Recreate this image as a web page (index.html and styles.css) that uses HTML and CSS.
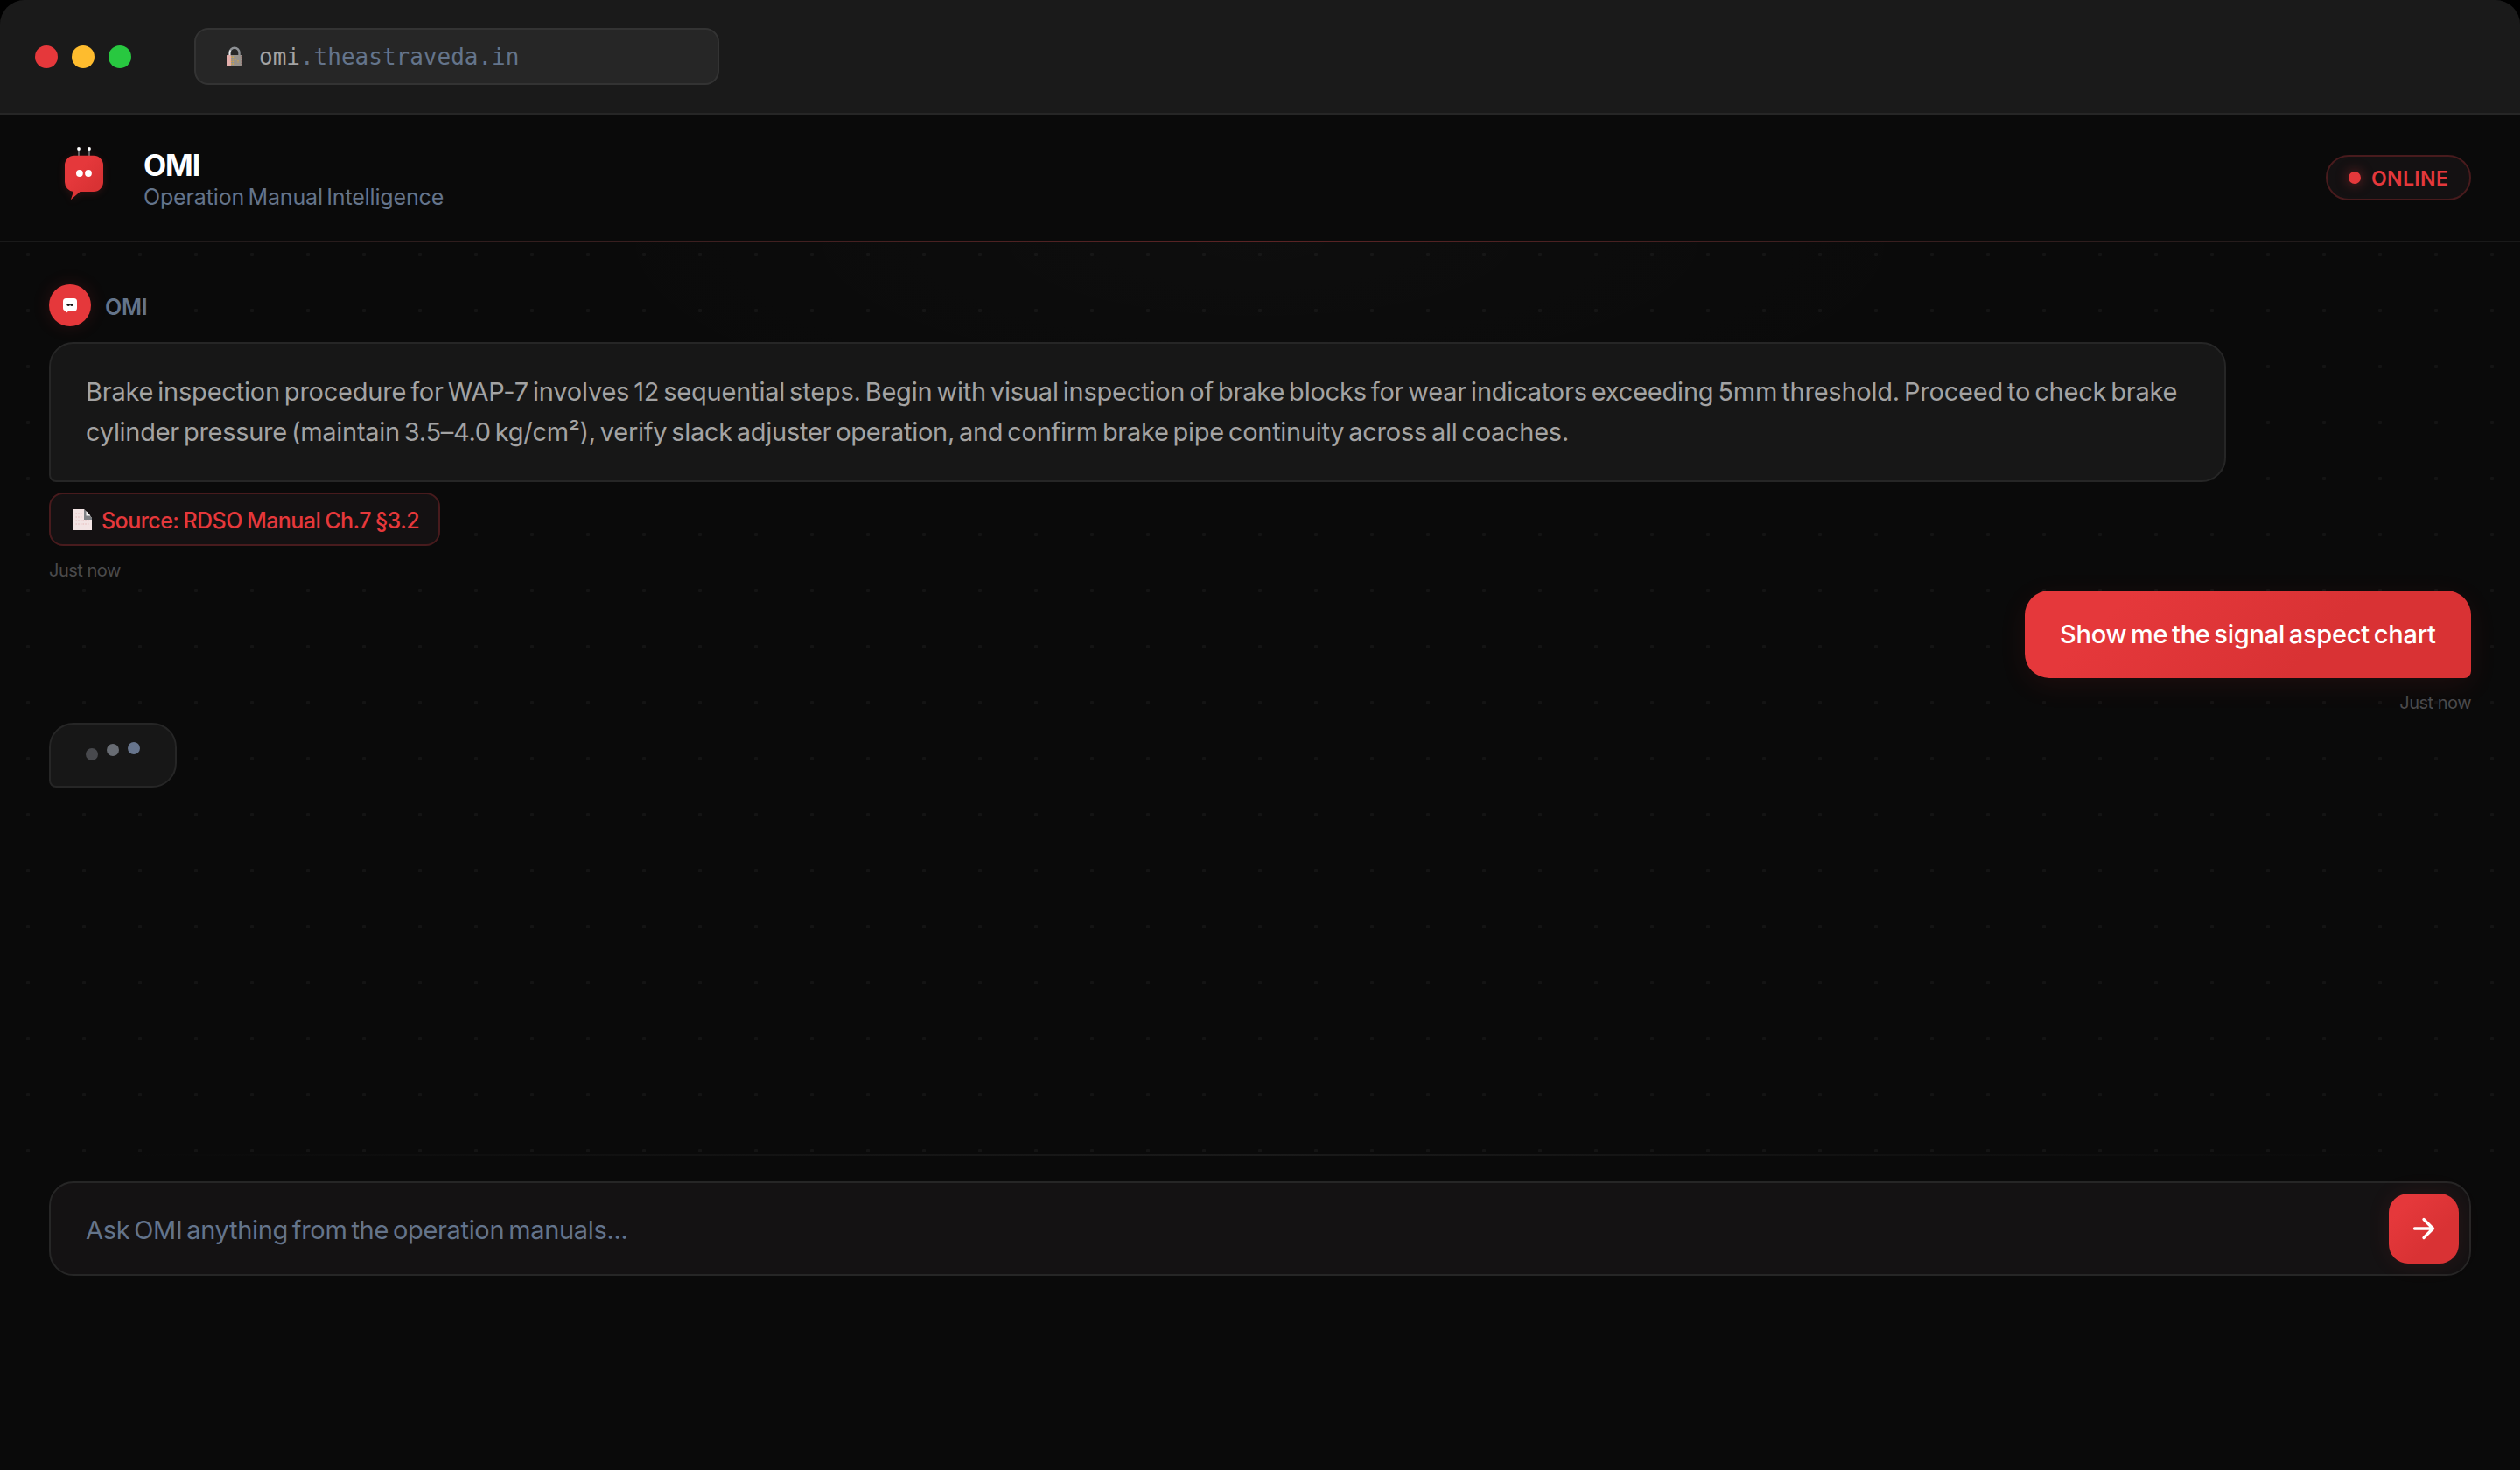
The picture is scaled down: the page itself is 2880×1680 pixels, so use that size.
FILE: index.html
```html
<!DOCTYPE html>
<html lang="en">
<head>
<meta charset="utf-8">
<title>OMI – Operation Manual Intelligence</title>
<link rel="stylesheet" href="styles.css">
</head>
<body>
<div class="window">
  <div class="browser-bar">
    <div class="lights">
      <span class="light light-red"></span>
      <span class="light light-yellow"></span>
      <span class="light light-green"></span>
    </div>
    <div class="url">
      <svg class="lock" width="18" height="24" viewBox="0 0 18 24">
        <path d="M3.500 11V7.500a5.500 5.800 0 0 1 11 0V11" fill="none" stroke="#8d9094" stroke-width="2.400"/>
        <path d="M3.500 10V7.500a5 5.400 0 0 1 1-3" fill="none" stroke="#e8e8e8" stroke-width="1.600"/>
        <rect x="0" y="10" width="18" height="12.500" rx="1.200" fill="#96918b"/>
        <rect x="0" y="10" width="5" height="12.500" rx="1" fill="#e3aeab"/>
        <path d="M5.500 11.500v10M7.500 11.500v10M10.500 14v2M13 16v3" stroke="#d3a545" stroke-width="1.200" stroke-dasharray="1.400 1.200"/>
        <path d="M17.200 11v11" stroke="#9c4443" stroke-width="1.200" stroke-dasharray="1.200 1.400"/>
      </svg>
      <span class="url-text"><span class="url-sub">omi</span>.theastraveda.in</span>
    </div>
  </div>

  <header class="header">
    <svg class="logo" width="80" height="80" viewBox="0 0 80 80">
      <defs>
        <linearGradient id="logoFill" x1="0" y1="0" x2="1" y2="1">
          <stop offset="0.35" stop-color="#e5383b"/>
          <stop offset="0.75" stop-color="#d93234"/>
        </linearGradient>
      </defs>
      <path d="M34 16V8M46 16V8" stroke="#85878b" stroke-width="1.400"/>
      <circle cx="34" cy="7" r="1.900" fill="#fff"/>
      <circle cx="46" cy="7" r="1.900" fill="#fff"/>
      <path d="M29 14.700H51a11 11 0 0 1 11 11V45a11 11 0 0 1-11 11H35.500L24.800 65.300L28 55.900A11 11 0 0 1 18 45V25.700a11 11 0 0 1 11-11z" fill="url(#logoFill)"/>
      <circle cx="34.900" cy="35" r="3.900" fill="#fff"/>
      <circle cx="45" cy="35" r="3.900" fill="#fff"/>
    </svg>
    <div class="brand">
      <div class="brand-name">OMI</div>
      <div class="brand-tag">Operation Manual Intelligence</div>
    </div>
    <div class="status"><span class="status-dot"></span><span class="status-text">ONLINE</span></div>
  </header>

  <main class="chat">
    <div class="sender">
      <span class="avatar">
        <svg width="20" height="20" viewBox="0 0 20 20">
          <path d="M5.500 2h9a3.500 3.500 0 0 1 3.500 3.500v7.500a3.500 3.500 0 0 1-3.500 3.500H8.500L5 19.300l.3-2.900A3.500 3.500 0 0 1 2 13V5.500A3.500 3.500 0 0 1 5.500 2z" fill="#fff"/>
          <ellipse cx="8.200" cy="9.500" rx="1.800" ry="1.400" fill="#111"/>
          <ellipse cx="12" cy="9.500" rx="1.800" ry="1.400" fill="#111"/>
        </svg>
      </span>
      <span class="sender-name">OMI</span>
    </div>
    <div class="bubble bubble-bot">
      <div class="line-first">Brake inspection procedure for WAP-7 involves 12 sequential steps. Begin with visual inspection of brake blocks for wear indicators exceeding 5mm threshold. Proceed to check brake</div>
      <div class="line-second">cylinder pressure (maintain 3.5–4.0 kg/cm²), verify slack adjuster operation, and confirm brake pipe continuity across all coaches.</div>
    </div>
    <div class="source">
      <svg width="22" height="24" viewBox="0 0 22 24">
        <path d="M0 0h12l9 10v14H0z" fill="#f3e4e4"/>
        <path d="M12 0l9 10v2h-9z" fill="#7f8387"/>
        <path d="M14.500 2l5 5.500h-5z" fill="#f5f5f5"/>
        <path d="M2.500 5h7M2.500 9h7M2.500 13h15M2.500 17h15" stroke="#e5b9b9" stroke-width="1.200" stroke-dasharray="1.500 1.200"/>
      </svg>
      <span class="source-text">Source: RDSO Manual Ch.7 §3.2</span>
    </div>
    <div class="time time-bot">Just now</div>

    <div class="bubble bubble-user">Show me the signal aspect chart</div>
    <div class="time time-user">Just now</div>

    <div class="typing">
      <span class="typing-dot dot-low"></span>
      <span class="typing-dot dot-mid"></span>
      <span class="typing-dot dot-high"></span>
    </div>
  </main>

  <footer class="composer">
    <div class="input">
      <span class="placeholder">Ask OMI anything from the operation manuals...</span>
      <div class="send">
        <svg width="36" height="36" viewBox="0 0 24 24" fill="none" stroke="#fff" stroke-width="2.200" stroke-linecap="round" stroke-linejoin="round">
          <path d="M5 12h14M12 5l7 7-7 7"/>
        </svg>
      </div>
    </div>
  </footer>
</div>
</body>
</html>
```

FILE: styles.css
```css
* { box-sizing: border-box; }

body {
  margin: 0;
  background: #000;
  font-family: Inter, "Liberation Sans", sans-serif;
}

svg { display: block; flex: none; }

.window {
  display: flex;
  flex-direction: column;
  width: 2880px;
  height: 1680px;
  overflow: hidden;
  border-radius: 28px 28px 0 0;
  background: #0a0a0a;
}

/* Browser chrome */
.browser-bar {
  display: flex;
  flex: none;
  align-items: center;
  gap: 72px;
  height: 131px;
  padding: 0 40px;
  background: #1a1a1a;
  border-bottom: 2px solid #262626;
}
.lights { display: flex; gap: 16px; }
.light { width: 26px; height: 26px; border-radius: 50%; }
.light-red { background: #e5383b; }
.light-yellow { background: #febc2e; }
.light-green { background: #28c840; }
.url {
  display: flex;
  align-items: center;
  gap: 19px;
  width: 600px;
  height: 65px;
  padding: 0 35px;
  border: 2px solid #333;
  border-radius: 16px;
  background: #262626;
}
.url-text {
  font: 26px "DejaVu Sans Mono", monospace;
  color: #64748b;
}
.url-sub { color: #a3a3a3; }

/* App header */
.header {
  display: flex;
  flex: none;
  align-items: center;
  height: 146px;
  padding: 0 56px 2px;
  background:
    linear-gradient(90deg, transparent 3%, rgba(229, 56, 59, 0.32) 50%, transparent 97%) 0 100% / 100% 2px no-repeat,
    linear-gradient(#1a1a1a, #1a1a1a) 0 100% / 100% 2px no-repeat,
    #0a0a0a;
}
.logo { filter: drop-shadow(0 2px 4px rgba(229, 56, 59, 0.16)); }
.brand { flex: 1; padding: 7px 0 0 28px; }
.brand-name {
  font-size: 34px;
  font-weight: 700;
  line-height: 36px;
  letter-spacing: -1.1px;
  color: #fff;
}
.brand-tag {
  font-size: 25px;
  line-height: 36px;
  letter-spacing: -0.15px;
  word-spacing: -2.5px;
  color: #64748b;
}
.status {
  display: flex;
  align-items: center;
  gap: 12px;
  width: 166px;
  height: 52px;
  padding-left: 24px;
  border: 2px solid #481b1d;
  border-radius: 26px;
  background: #141112;
}
.status-dot {
  width: 14px;
  height: 14px;
  border-radius: 50%;
  background: #e5383b;
  box-shadow: 0 0 14px rgba(229, 56, 59, 0.5);
}
.status-text {
  padding-top: 1px;
  font-size: 23px;
  font-weight: 600;
  letter-spacing: 0.4px;
  color: #e5383b;
}

/* Conversation */
.chat {
  display: flex;
  flex: none;
  flex-direction: column;
  height: 1042px;
  padding: 48px 56px 0;
  background:
    radial-gradient(ellipse 820px 240px at 50% 0, rgba(255, 255, 255, 0.014), transparent),
    radial-gradient(circle, #141414 2px, transparent 2.5px) 0 -18px / 64px 64px;
}
.sender { display: flex; align-items: center; gap: 16px; height: 48px; }
.avatar {
  display: flex;
  align-items: center;
  justify-content: center;
  width: 48px;
  height: 48px;
  border-radius: 50%;
  background: #e5383b;
  box-shadow: 0 0 20px rgba(229, 56, 59, 0.15);
}
.sender-name {
  padding-top: 3px;
  font-size: 25px;
  font-weight: 600;
  letter-spacing: -0.3px;
  color: #64748b;
}
.bubble {
  font-size: 29px;
  line-height: 46px;
  letter-spacing: -0.22px;
  word-spacing: -2.9px;
  white-space: nowrap;
}
.bubble-bot {
  width: 2488px;
  margin-top: 18px;
  padding: 32px 40px;
  border: 2px solid #262626;
  border-radius: 28px 28px 28px 8px;
  background: #171717;
  color: #a3a3a3;
}
.line-second { letter-spacing: -0.28px; }
.source {
  display: flex;
  align-self: flex-start;
  align-items: center;
  gap: 10px;
  width: 447px;
  height: 61px;
  margin-top: 12px;
  padding-left: 26px;
  border: 2px solid #481b1d;
  border-radius: 16px;
  background: #141112;
}
.source-text {
  padding-top: 2px;
  font-size: 25px;
  font-weight: 500;
  letter-spacing: -0.55px;
  word-spacing: -1px;
  white-space: nowrap;
  color: #e5383b;
}
.time {
  font-size: 20px;
  line-height: 26px;
  letter-spacing: -0.5px;
  color: #4a4a4c;
}
.time-bot { margin-top: 15px; }
.bubble-user {
  align-self: flex-end;
  width: 510px;
  margin-top: 10px;
  padding: 27px 40px;
  border-radius: 28px 28px 8px 28px;
  background: linear-gradient(135deg, #e5383b 20%, #d93234 65%);
  box-shadow: 0 8px 32px rgba(229, 56, 59, 0.09);
  font-weight: 500;
  color: #fff;
}
.time-user { align-self: flex-end; margin-top: 15px; }
.typing {
  display: flex;
  gap: 10px;
  width: 146px;
  height: 74px;
  margin-top: 10px;
  padding: 20px 40px;
  border: 2px solid #262626;
  border-radius: 28px 28px 28px 8px;
  background: #171717;
}
.typing-dot { width: 14px; height: 14px; border-radius: 50%; background: #64748b; }
.dot-low { margin-top: 7px; background: #48494d; }
.dot-mid { margin-top: 2px; background: #686c73; }
.dot-high { background: #67758d; }

/* Message composer */
.composer {
  flex: 1;
  padding: 31px 56px 0;
  background:
    linear-gradient(90deg, transparent 5%, #1a1a1a 50%, transparent 95%) 0 0 / 100% 2px no-repeat,
    #0a0a0a;
}
.input {
  display: flex;
  align-items: center;
  justify-content: space-between;
  height: 108px;
  padding: 0 12px 0 40px;
  border: 2px solid #262626;
  border-radius: 28px;
  background: #141213;
}
.placeholder {
  padding-top: 2px;
  font-size: 29px;
  letter-spacing: -0.33px;
  word-spacing: -2.9px;
  color: #64748b;
}
.send {
  display: flex;
  align-items: center;
  justify-content: center;
  width: 80px;
  height: 80px;
  border-radius: 22px;
  background: linear-gradient(135deg, #e5383b 20%, #d93234 65%);
  box-shadow: 0 0 26px rgba(229, 56, 59, 0.1);
}
```
